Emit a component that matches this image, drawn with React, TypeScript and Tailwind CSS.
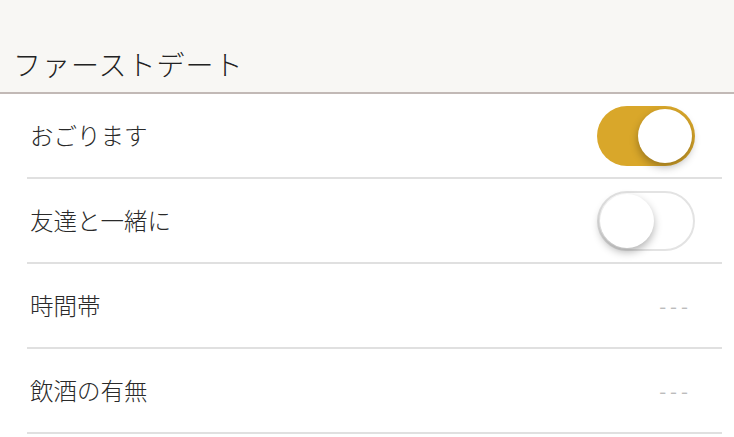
import React, { useState } from 'react';

const font = { fontFamily: '"Noto Sans CJK JP", "Noto Sans", sans-serif' };

function Toggle({ on, onChange }: { on: boolean; onChange: () => void }) {
  return (
    <button
      onClick={onChange}
      className={`relative h-[60px] w-[98px] shrink-0 rounded-full transition-colors ${
        on ? 'bg-[#d9a72a]' : 'border-2 border-[#e3e3e3] bg-white'
      }`}
    >
      <span
        className={`absolute top-1/2 h-[54px] w-[54px] -translate-y-1/2 rounded-full bg-white shadow-[0_4px_8px_rgba(0,0,0,0.3)] ${
          on ? 'right-[3px]' : 'left-[1px]'
        }`}
      />
    </button>
  );
}

function Row({ label, children }: { label: string; children: React.ReactNode }) {
  return (
    <div className="ml-[27px] mr-[12px] flex h-[85px] items-center justify-between border-b-2 border-[#e0e0e0] pl-[3px] pr-[27px]">
      <span className="text-[23.5px] font-light text-[#2a2a2a]">{label}</span>
      {children}
    </div>
  );
}

export default function App() {
  const [treat, setTreat] = useState(true);
  const [friends, setFriends] = useState(false);

  return (
    <div className="h-[437px] w-[734px] overflow-hidden bg-white" style={font}>
      <div className="flex h-[94px] items-end border-b-2 border-[#c2b9b6] bg-[#f8f7f4] pl-[13px] pb-[7px]">
        <h1 className="text-[28px] font-light tracking-[1px] text-[#222]">ファーストデート</h1>
      </div>
      <Row label="おごります">
        <Toggle on={treat} onChange={() => setTreat(!treat)} />
      </Row>
      <Row label="友達と一緒に">
        <Toggle on={friends} onChange={() => setFriends(!friends)} />
      </Row>
      <Row label="時間帯">
        <span className="mr-[3px] text-[20px] tracking-[4px] text-[#bcbcbc]">---</span>
      </Row>
      <Row label="飲酒の有無">
        <span className="mr-[3px] text-[20px] tracking-[4px] text-[#bcbcbc]">---</span>
      </Row>
    </div>
  );
}
